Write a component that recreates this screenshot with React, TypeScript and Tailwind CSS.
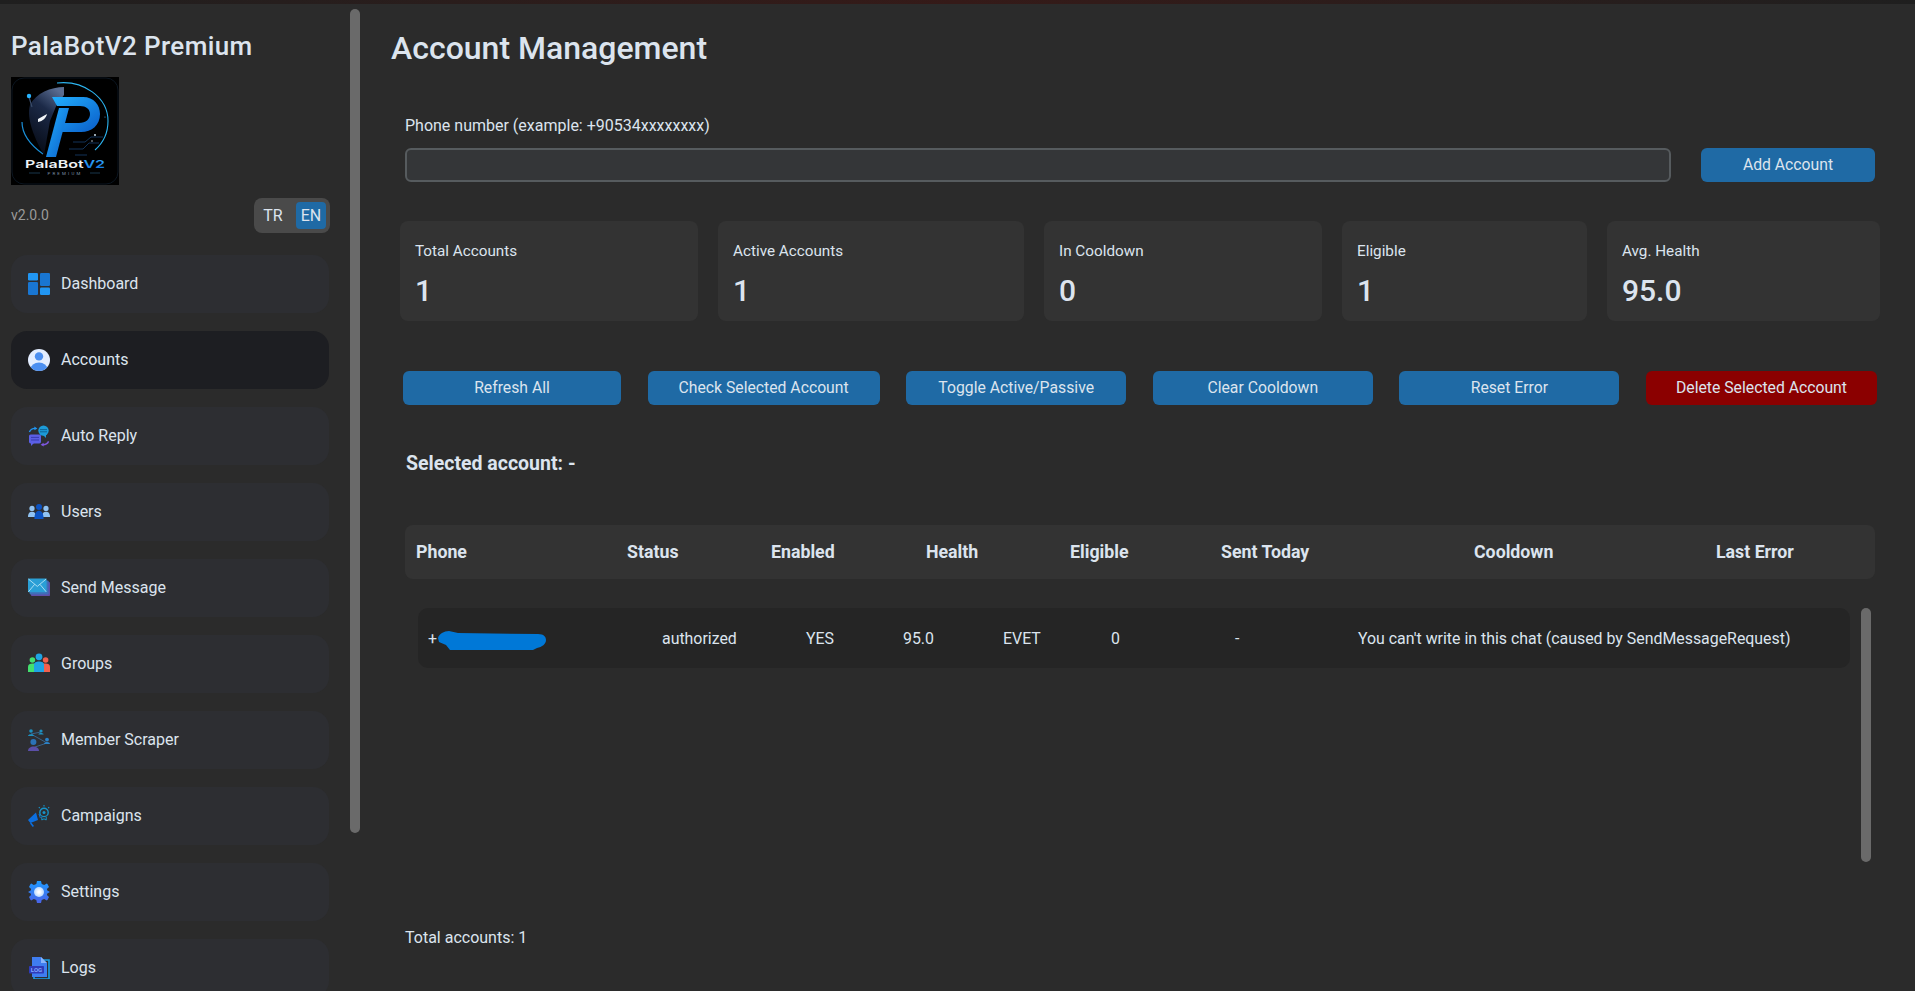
import type { ReactNode } from 'react'

const btn =
  'flex h-[34px] items-center justify-center rounded-[6px] bg-[#1f6aa5] text-[15.75px] text-[#dce4ee]'

function DashboardIcon() {
  return (
    <svg viewBox="0 0 22 22" className="h-[22px] w-[22px]">
      <rect x="0" y="0" width="10" height="7.4" rx="1.2" fill="#2196f3" />
      <rect x="0" y="9" width="10" height="13" rx="1.2" fill="#1976d2" />
      <rect x="12" y="0" width="10" height="13" rx="1.2" fill="#1976d2" />
      <rect x="12" y="14.6" width="10" height="7.4" rx="1.2" fill="#2196f3" />
    </svg>
  )
}

function AccountIcon() {
  return (
    <svg viewBox="0 0 22 22" className="h-[22px] w-[22px]">
      <defs>
        <clipPath id="acc-clip">
          <circle cx="11" cy="11" r="11" />
        </clipPath>
      </defs>
      <circle cx="11" cy="11" r="11" fill="#e3edff" />
      <circle cx="11" cy="7.4" r="4.2" fill="#4c8ff0" />
      <ellipse cx="11" cy="20" rx="8.4" ry="6.4" fill="#4c8ff0" clipPath="url(#acc-clip)" />
    </svg>
  )
}

function AutoReplyIcon() {
  return (
    <svg viewBox="0 0 22 22" className="h-[22px] w-[22px]">
      <circle cx="15.5" cy="5.6" r="5.2" fill="#1c9bd8" />
      <path d="M15 10 l3 3 l0 -3.4 z" fill="#1c9bd8" />
      <path d="M12 4.6 h7 M12 6.8 h7" stroke="#0d5f90" strokeWidth="0.9" />
      <rect x="1" y="9.4" width="12" height="9" rx="1.6" fill="#5b5fe6" />
      <path d="M3 18 v3 l3 -3 z" fill="#5b5fe6" />
      <path d="M3 12.4 h8 M3 15 h8" stroke="#3438a8" strokeWidth="0.9" />
      <path d="M1.4 7 C2.5 4.6 4.6 3.4 7 3.4" stroke="#2196f3" strokeWidth="1.4" fill="none" />
      <path d="M6.4 1.4 L9.4 3.4 L6.4 5.2 z" fill="#2196f3" />
      <path d="M20.6 16.4 C19.6 18.6 17.4 19.8 15 19.8" stroke="#7e57e0" strokeWidth="1.4" fill="none" />
      <path d="M15.6 17.8 L12.6 19.8 L15.6 21.6 z" fill="#7e57e0" />
    </svg>
  )
}

function UsersIcon() {
  return (
    <svg viewBox="0 0 22 22" className="h-[22px] w-[22px]">
      <circle cx="4" cy="7.4" r="2.6" fill="#90c2f2" />
      <path d="M0 16 C0 12 2 10.8 4 10.8 C6 10.8 8 12 8 16 z" fill="#90c2f2" />
      <circle cx="18" cy="7.4" r="2.6" fill="#90c2f2" />
      <path d="M14 16 C14 12 16 10.8 18 10.8 C20 10.8 22 12 22 16 z" fill="#90c2f2" />
      <circle cx="11" cy="6" r="3" fill="#0b52c2" />
      <path d="M6.4 18 C6.4 12 8.6 9.8 11 9.8 C13.4 9.8 15.6 12 15.6 18 z" fill="#0b52c2" />
    </svg>
  )
}

function SendIcon() {
  return (
    <svg viewBox="0 0 22 22" className="h-[22px] w-[22px]">
      <rect x="3" y="5" width="19" height="14" rx="0.8" fill="#5f4fa8" />
      <rect x="1.6" y="3.4" width="19" height="14" rx="0.8" fill="#3f6fb8" />
      <rect x="0" y="1.6" width="18.6" height="13.6" rx="0.8" fill="#2a9fd6" />
      <path d="M0.4 2 L9.3 9.4 L18.2 2 M0.4 14.8 L6.6 7.4 M18.2 14.8 L12 7.4" stroke="#c8ecfa" strokeWidth="0.8" fill="none" />
    </svg>
  )
}

function GroupsIcon() {
  return (
    <svg viewBox="0 0 22 22" className="h-[22px] w-[22px]">
      <circle cx="4.4" cy="7" r="2.8" fill="#43e06f" />
      <path d="M0 19 V14 C0 11.2 2 10.4 4.4 10.4 H7 V19 z" fill="#43e06f" />
      <circle cx="17.6" cy="7" r="2.8" fill="#f2604e" />
      <path d="M22 19 V14 C22 11.2 20 10.4 17.6 10.4 H15 V19 z" fill="#f2604e" />
      <path d="M6 19 V12 C6 9.2 8 8.4 11 8.4 C14 8.4 16 9.2 16 12 V19 z" fill="#1ea4e4" />
      <circle cx="11" cy="3.8" r="3.4" fill="#1ea4e4" />
    </svg>
  )
}

function ScraperIcon() {
  return (
    <svg viewBox="0 0 22 22" className="h-[22px] w-[22px]">
      <path d="M3 5 L19 14 M7 18 L19 14 M3 5 L13 3" stroke="#3c6f9e" strokeWidth="0.8" fill="none" />
      <circle cx="3" cy="2" r="1.8" fill="#1e8fc0" />
      <path d="M0 7 C0 4.6 6 4.6 6 7 z" fill="#1e8fc0" />
      <circle cx="13" cy="2" r="1.6" fill="#1e8fc0" />
      <path d="M10.4 5.6 C10.4 3.6 15.6 3.6 15.6 5.6 z" fill="#1e8fc0" />
      <circle cx="19" cy="10.6" r="1.9" fill="#2b82c8" />
      <path d="M16 15 C16 12.2 22 12.2 22 15 z" fill="#2b82c8" />
      <circle cx="5.4" cy="13" r="3" fill="#2b72b8" />
      <path d="M0 22 C0 16 11 16 11 22 z" fill="#5b4fa8" />
    </svg>
  )
}

function CampaignIcon() {
  return (
    <svg viewBox="0 0 22 22" className="h-[22px] w-[22px]">
      <path d="M0 15 L8 7.6 L10 15 L2.4 18 z" fill="#0c6fe0" />
      <path d="M2.6 18 L5.4 21.4" stroke="#0c6fe0" strokeWidth="1.6" />
      <path d="M11 9 L12.4 13" stroke="#0c6fe0" strokeWidth="1" />
      <circle cx="16" cy="7.4" r="4.2" fill="none" stroke="#1793c8" strokeWidth="1.4" />
      <circle cx="16" cy="7.4" r="1.5" fill="#1793c8" />
      <path d="M13.8 11.8 V15 L16 13.8 L18.2 15 V11.8" stroke="#1793c8" strokeWidth="1" fill="none" />
      <path d="M16 0 V1.4 M10.8 2.2 L11.8 3 M21.2 2.2 L20.2 3" stroke="#1793c8" strokeWidth="1.1" />
    </svg>
  )
}

function SettingsIcon() {
  return (
    <svg viewBox="0 0 22 22" className="h-[22px] w-[22px]">
      <defs>
        <linearGradient id="gear-fill" x1="0" y1="0" x2="0" y2="1">
          <stop offset="0" stopColor="#1e9bff" />
          <stop offset="1" stopColor="#4a63e8" />
        </linearGradient>
        <radialGradient id="gear-core">
          <stop offset="0.2" stopColor="#ffffff" />
          <stop offset="1" stopColor="#b8d8ff" />
        </radialGradient>
      </defs>
      <path
        d="M9 0 H13 L13.7 3 L16.2 4.1 L18.8 2.4 L19.6 3.2 L21 6 L18.9 8 L19.3 9.6 L22 11 L19.3 12.4 L18.9 14 L21 16 L19.6 18.8 L18.8 19.6 L16.2 17.9 L13.7 19 L13 22 H9 L8.3 19 L5.8 17.9 L3.2 19.6 L2.4 18.8 L1 16 L3.1 14 L2.7 12.4 L0 11 L2.7 9.6 L3.1 8 L1 6 L2.4 3.2 L3.2 2.4 L5.8 4.1 L8.3 3 z"
        fill="url(#gear-fill)"
      />
      <circle cx="11" cy="11" r="5" fill="url(#gear-core)" />
    </svg>
  )
}

function LogsIcon() {
  return (
    <svg viewBox="0 0 22 22" className="h-[22px] w-[22px]">
      <path d="M6 3 H21 V22 H6 z" fill="none" stroke="#18a0e8" strokeWidth="1.6" />
      <path d="M4 0 H13 L19 6 V20 H4 z" fill="#3f7df0" />
      <path d="M13 0 L19 6 H13 z" fill="#8ab4fa" />
      <rect x="1" y="9" width="15" height="7.6" rx="0.8" fill="#2f3bb8" />
      <text x="8.5" y="15" textAnchor="middle" fontSize="6" fontWeight="700" fontFamily="Roboto, sans-serif" fill="#7fa8ff">
        LOG
      </text>
    </svg>
  )
}

function Logo() {
  return (
    <svg viewBox="0 0 108 108" className="h-[108px] w-[108px]">
      <defs>
        <linearGradient id="logo-p" x1="0" y1="0" x2="1" y2="1">
          <stop offset="0" stopColor="#22b0ff" />
          <stop offset="1" stopColor="#0a5cc8" />
        </linearGradient>
        <linearGradient id="logo-helmet" x1="0.7" y1="0" x2="0.3" y2="1">
          <stop offset="0" stopColor="#5a6c90" />
          <stop offset="0.35" stopColor="#1c2a48" />
          <stop offset="1" stopColor="#060a14" />
        </linearGradient>
        <linearGradient id="logo-v" x1="0" y1="0" x2="0" y2="1">
          <stop offset="0" stopColor="#40b8ff" />
          <stop offset="1" stopColor="#0c70e0" />
        </linearGradient>
      </defs>
      <rect width="108" height="108" fill="#000" />
      <rect x="1" y="1" width="106" height="106" rx="12" fill="none" stroke="#0b1520" strokeWidth="1" />
      <path d="M46 6 C72 3 97 20 97 44 C97 56 92 66 84 73" fill="none" stroke="#2cb4f0" strokeWidth="1.1" />
      <path d="M11 45 C11 56 18 67 32 77" fill="none" stroke="#1a8fd8" strokeWidth="1.2" />
      <path d="M53 10 C40 10 25 16 19 28 C15 42 24 62 33 78 L39 44 L46 27 L53 18 z" fill="url(#logo-helmet)" />
      <path d="M27 42 L36 37 C35 41 32 44 27 45 z" fill="#f2f6fa" />
      <path d="M18 20 L21 30" stroke="#3a4c6a" strokeWidth="1.2" />
      <circle cx="18" cy="19" r="2.2" fill="#28b4ff" />
      <path d="M41 20 H72 C83 20 89 28 89 37 C89 48 81 55 70 55 H50 L53 46 H68 C75 46 79 42 79 37 C79 32 75 29 69 29 H46 z" fill="url(#logo-p)" />
      <path d="M48 31 H58 L45 80 H35 z" fill="url(#logo-p)" />
      <path d="M62 65 H74 L80 60 H92 M58 72 H72 L78 66 H88 M64 78 H76" fill="none" stroke="#17406e" strokeWidth="0.8" />
      <circle cx="84" cy="58" r="0.9" fill="#dff2ff" />
      <circle cx="81" cy="64" r="0.7" fill="#dff2ff" />
      <circle cx="94" cy="40" r="0.6" fill="#4aa8e0" />
      <text x="14" y="90.5" fontSize="11" textLength="80" lengthAdjust="spacingAndGlyphs" fontWeight="600" fontFamily="Inter, Roboto, sans-serif" fill="#eef2f6">
        PalaBot
        <tspan fill="url(#logo-v)">V2</tspan>
      </text>
      <path d="M18 96 H29 M79 96 H89" stroke="#2a5c80" strokeWidth="0.6" />
      <text x="54" y="97.6" textAnchor="middle" fontSize="4.4" letterSpacing="2.2" fontFamily="Roboto, sans-serif" fill="#7f93a8">
        PREMIUM
      </text>
    </svg>
  )
}

const navItems: { label: string; icon: ReactNode }[] = [
  { label: 'Dashboard', icon: <DashboardIcon /> },
  { label: 'Accounts', icon: <AccountIcon /> },
  { label: 'Auto Reply', icon: <AutoReplyIcon /> },
  { label: 'Users', icon: <UsersIcon /> },
  { label: 'Send Message', icon: <SendIcon /> },
  { label: 'Groups', icon: <GroupsIcon /> },
  { label: 'Member Scraper', icon: <ScraperIcon /> },
  { label: 'Campaigns', icon: <CampaignIcon /> },
  { label: 'Settings', icon: <SettingsIcon /> },
  { label: 'Logs', icon: <LogsIcon /> },
]

const stats = [
  { label: 'Total Accounts', value: '1' },
  { label: 'Active Accounts', value: '1' },
  { label: 'In Cooldown', value: '0' },
  { label: 'Eligible', value: '1' },
  { label: 'Avg. Health', value: '95.0' },
]

const actions = [
  { label: 'Refresh All', w: 'w-[218px]' },
  { label: 'Check Selected Account', w: 'w-[232px]' },
  { label: 'Toggle Active/Passive', w: 'w-[220px]' },
  { label: 'Clear Cooldown', w: 'w-[220px]' },
  { label: 'Reset Error', w: 'w-[220px]' },
]

const columns = ['Phone', 'Status', 'Enabled', 'Health', 'Eligible', 'Sent Today', 'Cooldown', 'Last Error']

function Sidebar() {
  return (
    <aside className="flex w-[372px] shrink-0 overflow-hidden">
      <div className="ml-[11px] w-[318px] shrink-0">
        <h2 className="mt-[27px] h-[30px] text-[26px] leading-[30px] font-medium tracking-[0.4px] text-[#dce4ee]">PalaBotV2 Premium</h2>
        <div className="mt-[16px]">
          <Logo />
        </div>
        <div className="mt-[13px] flex h-[35px] items-center justify-between">
          <span className="text-[14px] text-[#9a9a9a]">v2.0.0</span>
          <div className="-mr-px flex h-[35px] w-[76px] items-center rounded-[8px] bg-[#4a4a4a] text-[16px] text-[#dce4ee]">
            <span className="w-[38px] text-center">TR</span>
            <span className="ml-[4px] flex h-[27px] w-[30px] items-center justify-center rounded-[4px] bg-[#1f6aa5]">EN</span>
          </div>
        </div>
        <nav className="mt-[22px] flex flex-col gap-[18px]">
          {navItems.map((item) => (
            <div
              key={item.label}
              className={`flex h-[58px] shrink-0 items-center gap-[11px] rounded-[16px] pl-[17px] text-[16px] text-[#dce4ee] ${
                item.label === 'Accounts' ? 'bg-[#1d1e22]' : 'bg-[#2d2e32]'
              }`}
            >
              {item.icon}
              <span>{item.label}</span>
            </div>
          ))}
        </nav>
      </div>
      <div className="mt-[5px] ml-[21px] h-[824px] w-[10px] shrink-0 rounded-[5px] bg-[#6a6a6a]" />
    </aside>
  )
}

function Main() {
  return (
    <main className="flex-1 text-[#dce4ee]">
      <h1 className="mt-[26px] ml-[19px] h-[36px] text-[32px] leading-[36px] font-medium">Account Management</h1>

      <div className="mt-[49px] mr-[40px] ml-[33px]">
        <label className="block h-[22px] text-[16px] leading-[22px]">Phone number (example: +90534xxxxxxxx)</label>
        <div className="mt-[11px] flex items-center gap-[30px]">
          <div className="h-[34px] flex-1 rounded-[6px] border-2 border-[#565b5e] bg-[#343638]" />
          <button type="button" className={`${btn} w-[174px]`}>
            Add Account
          </button>
        </div>
      </div>

      <div className="mt-[39px] mr-[35px] ml-[28px] grid grid-cols-[298px_306px_278px_245px_273px] gap-[20px]">
        {stats.map((s) => (
          <div key={s.label} className="h-[100px] rounded-[8px] bg-[#333333] pt-[19px] pl-[15px]">
            <div className="h-[22px] text-[15.25px] leading-[22px]">{s.label}</div>
            <div className="mt-[12px] h-[34px] text-[30px] leading-[34px] font-medium">{s.value}</div>
          </div>
        ))}
      </div>

      <div className="mt-[50px] mr-[38px] ml-[31px] flex justify-between">
        {actions.map((a) => (
          <button key={a.label} type="button" className={`${btn} ${a.w}`}>
            {a.label}
          </button>
        ))}
        <button
          type="button"
          className="flex h-[34px] w-[231px] items-center justify-center rounded-[6px] bg-[#8b0000] text-[15.75px] text-[#dce4ee]"
        >
          Delete Selected Account
        </button>
      </div>

      <div className="mt-[47px] ml-[34px] h-[24px] text-[19.5px] leading-[24px] font-bold">Selected account: -</div>

      <div className="mt-[49px] mr-[40px] ml-[33px] grid h-[54px] grid-cols-[211px_144px_155px_144px_151px_253px_242px_1fr] items-center rounded-[8px] bg-[#333333] pl-[11px] text-[17.75px] font-bold">
        {columns.map((c) => (
          <span key={c}>{c}</span>
        ))}
      </div>

      <div className="mt-[29px] mr-[44px] ml-[46px] flex gap-[11px]">
        <div className="h-[60px] flex-1 rounded-[10px] bg-[#252525]">
          <div className="grid h-full grid-cols-[234px_144px_97px_100px_108px_124px_123px_1fr] items-center pt-[2px] pl-[10px] text-[15.9px]">
            <span className="relative">
              +
              <svg viewBox="0 0 108 19" className="absolute top-[4px] left-[10px] h-[19px] w-[108px]">
                <path
                  d="M0 7 C1 3 6 0 11 0 L20 2 L100 3 C106 3 108 6 108 9 C108 13 104 16 99 17 L95 19 L12 19 L8 14 L1 11 Z"
                  fill="#0078d7"
                />
              </svg>
            </span>
            <span>authorized</span>
            <span>YES</span>
            <span>95.0</span>
            <span>EVET</span>
            <span>0</span>
            <span>-</span>
            <span>You can't write in this chat (caused by SendMessageRequest)</span>
          </div>
        </div>
        <div className="h-[254px] w-[10px] rounded-[5px] bg-[#6a6a6a]" />
      </div>

      <div className="mt-[65px] ml-[33px] h-[22px] text-[16px] leading-[22px]">Total accounts: 1</div>
    </main>
  )
}

export default function App() {
  return (
    <div className="h-[991px] w-[1915px] overflow-hidden bg-[#2b2b2b] [font-family:Roboto,sans-serif]">
      <div className="h-1 bg-gradient-to-r from-[#1f1f1f] via-[#351a18] to-[#1f1f1f]" />
      <div className="flex h-[987px]">
        <Sidebar />
        <Main />
      </div>
    </div>
  )
}
